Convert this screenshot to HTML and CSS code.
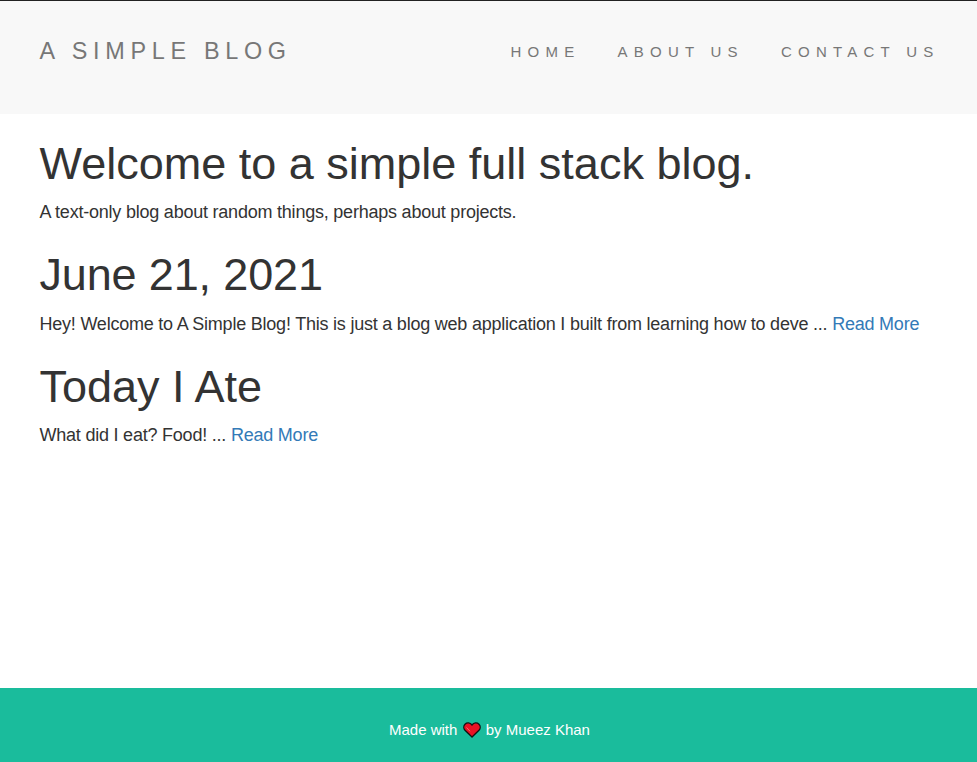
FILE: index.html
```html
<!DOCTYPE html>
<html lang="en">
<head>
<meta charset="utf-8">
<title>A Simple Blog</title>
<link rel="stylesheet" href="styles.css">
</head>
<body>
<nav class="navbar">
  <a class="brand">A SIMPLE BLOG</a>
  <ul class="links">
    <li><a>HOME</a></li>
    <li><a>ABOUT US</a></li>
    <li><a>CONTACT US</a></li>
  </ul>
</nav>
<main class="content">
  <h1>Welcome to a simple full stack blog.</h1>
  <p>A text-only blog about random things, perhaps about projects.</p>
  <h1 class="date">June 21, 2021</h1>
  <p>Hey! Welcome to A Simple Blog! This is just a blog web application I built from learning how to deve ... <a class="more">Read More</a></p>
  <h1>Today I Ate</h1>
  <p>What did I eat? Food! ... <a class="more">Read More</a></p>
</main>
<footer class="footer">
  <p>Made with <svg class="heart" viewBox="0 0 18 16"><path class="shape" d="M9 15 2 8.200C.4 6.500.4 3.800 2 2.200 4 .3 7 .5 9 3 11 .5 14 .3 16 2.200 17.600 3.800 17.600 6.500 16 8.200Z"/><path class="shine" d="M3.500 5.500 7 9.200"/></svg> by Mueez Khan</p>
</footer>
</body>
</html>
```
FILE: styles.css
```css
* { box-sizing: border-box; }
body {
  margin: 0;
  min-height: 100vh;
  display: flex;
  flex-direction: column;
  font-family: "Liberation Sans", Arial, sans-serif;
  font-size: 18px;
  line-height: 25.7px;
  color: #333;
  background: #fff;
}
.navbar {
  height: 114px;
  padding: 36px 37.5px 0 39.5px;
  display: flex;
  justify-content: space-between;
  background: #f8f8f8;
  border-top: 1px solid #222;
  color: #777;
}
.brand { font-size: 23.4px; line-height: 28px; letter-spacing: 5.700px; }
.links {
  display: flex;
  gap: 37px;
  margin: 0;
  padding: 0;
  list-style: none;
  font-size: 15px;
  line-height: 30px;
  letter-spacing: 6.250px;
}
.content { flex: 1; padding: 25px 39.5px 0; }
h1 { margin: 0 0 11.3px; font-size: 45px; line-height: 50px; font-weight: 400; }
.date { letter-spacing: -0.15px; }
p { margin: 0; white-space: nowrap; }
.content p { margin-bottom: 24.4px; letter-spacing: -0.22px; }
.more { color: #337ab7; }
.footer {
  height: 74px;
  padding: 29px 0 0 2px;
  background: #1abc9c;
  color: #fff;
  text-align: center;
  font-size: 15px;
}
.heart { width: 18px; height: 16px; margin: 0 1px; vertical-align: -3px; }
.shape { fill: #e81224; stroke: #111; stroke-width: 1.300; }
.shine { fill: none; stroke: #f36b70; stroke-width: 1; }
```
